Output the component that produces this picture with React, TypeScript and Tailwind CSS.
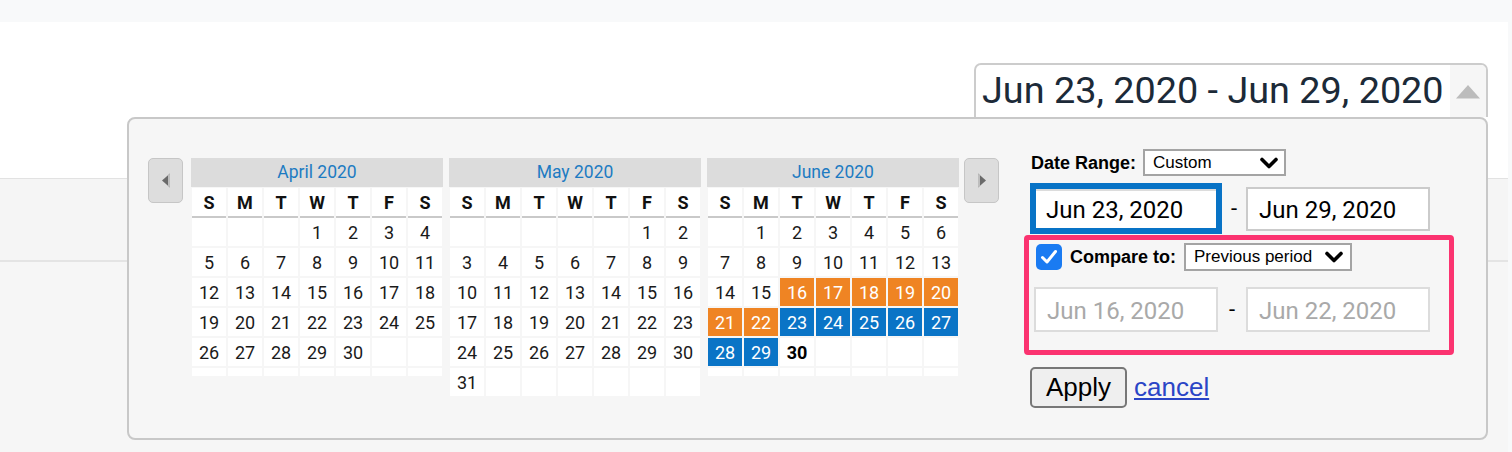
import React from "react";

type MonthProps = { title: string; start: number; days: number };

const ORANGE = [16, 17, 18, 19, 20, 21, 22];
const BLUE = [23, 24, 25, 26, 27, 28, 29];

function Month({ title, start, days, june }: MonthProps & { june?: boolean }) {
  const cells: (number | null)[] = [];
  for (let i = 0; i < start; i++) cells.push(null);
  for (let d = 1; d <= days; d++) cells.push(d);
  while (cells.length % 7 !== 0) cells.push(null);
  const weeks = cells.length / 7;
  const names = ["S", "M", "T", "W", "T", "F", "S"];
  return (
    <div className="w-[252px] flex flex-col">
      <div className="h-[29px] bg-[#dcdcdc] flex items-center justify-center text-[17.5px] text-[#1d7bc2]">
        {title}
      </div>
      <div className="grid grid-cols-7 gap-x-[2px] px-[1px] mt-[1px]">
        {names.map((n, i) => (
          <div
            key={i}
            className="h-[30px] bg-white border-b-2 border-[#c9c9c9] flex items-center justify-center font-bold text-[18px] text-[#111]"
          >
            {n}
          </div>
        ))}
      </div>
      <div className="grid grid-cols-7 gap-x-[2px] gap-y-[2px] px-[1px]">
        {cells.map((d, i) => {
          const orange = june && d !== null && ORANGE.includes(d);
          const blue = june && d !== null && BLUE.includes(d);
          const bold = june && d === 30;
          return (
            <div
              key={i}
              className={
                orange
                  ? "h-[28px] bg-[#ef8423] text-white flex items-center justify-center text-[18px]"
                  : blue
                  ? "h-[28px] bg-[#0a74c6] text-white flex items-center justify-center text-[18px]"
                  : bold
                  ? "h-[28px] bg-white text-black font-bold flex items-center justify-center text-[18px]"
                  : "h-[28px] bg-white text-[#1a1a1a] flex items-center justify-center text-[18px]"
              }
            >
              {d ?? ""}
            </div>
          );
        })}
        {weeks < 6 &&
          names.map((_, i) => <div key={"e" + i} className="h-[8px] bg-white" />)}
      </div>
    </div>
  );
}

function NavButton({ dir }: { dir: "left" | "right" }) {
  return (
    <div className="w-[35px] h-[45px] bg-[#dddddd] border border-[#c6c6c6] rounded-[5px] flex items-center justify-center shrink-0">
      <svg width="10" height="15" viewBox="0 0 10 15">
        {dir === "left" ? (
          <>
            <polygon points="9,0.5 9,14.5 1,7.5" fill="#6a6a6a" />
            <polygon points="9,0.5 9,14.5 7,12.7 7,2.3" fill="#bdbdbd" />
          </>
        ) : (
          <>
            <polygon points="1,0.5 1,14.5 9,7.5" fill="#6a6a6a" />
            <polygon points="1,0.5 1,14.5 3,12.7 3,2.3" fill="#bdbdbd" />
          </>
        )}
      </svg>
    </div>
  );
}

function Chevron() {
  return (
    <svg width="18" height="12" viewBox="0 0 18 12">
      <polyline
        points="2,2.5 9,9.5 16,2.5"
        fill="none"
        stroke="#000"
        strokeWidth="3.6"
        strokeLinecap="round"
        strokeLinejoin="round"
      />
    </svg>
  );
}

export default function App() {
  return (
    <div className="w-[1512px] h-[452px] bg-[#f8f9fa] overflow-hidden font-[Roboto,sans-serif]">
      <div className="h-[22px]" />
      <div className="w-[1508px]">
        <div className="h-[156px] bg-white flex justify-end pr-[20px] pt-[41px]">
          <div className="relative w-[514px] h-[54px] border-2 border-b-0 border-[#cccccc] rounded-t-[7px] bg-white flex items-center z-20">
            <span className="pl-[6px] text-[37.8px] leading-none text-[#1c2a38] whitespace-nowrap">
              Jun 23, 2020 - Jun 29, 2020
            </span>
            <div className="ml-auto w-[36px] h-full bg-[#f6f6f6] rounded-tr-[5px] flex items-center justify-center">
              <svg width="26" height="15" viewBox="0 0 26 15">
                <polygon points="1,14.5 25,14.5 13,1" fill="#bcbcbc" />
              </svg>
            </div>

            <div className="absolute right-[-2px] top-full w-[1361px] bg-[#f6f6f6] border-2 border-[#c8c8c8] rounded-[8px] pt-[30px] pb-[30px] pl-[19px] flex items-start">
              <div className="mt-[9px] flex items-start">
                <NavButton dir="left" />
                <div className="ml-[8px] flex gap-[6px]">
                  <Month title="April 2020" start={3} days={30} />
                  <Month title="May 2020" start={5} days={31} />
                  <Month title="June 2020" start={1} days={30} june />
                </div>
                <div className="ml-[5px]">
                  <NavButton dir="right" />
                </div>
              </div>

              <div className="ml-[25px] w-[430px] flex flex-col text-black">
                <div className="h-[27px] flex items-center pl-[7px]">
                  <span className="font-['Liberation_Sans',Arial,sans-serif] font-bold text-[18px] leading-none">
                    Date Range:
                  </span>
                  <div className="ml-[7px] w-[143px] h-[27px] border-2 border-[#a4a4a4] bg-white flex items-center justify-between pl-[8px] pr-[6px] text-[17px] font-['Liberation_Sans',Arial,sans-serif]">
                    <span>Custom</span>
                    <Chevron />
                  </div>
                </div>

                <div className="mt-[7px] flex items-center pl-[6px]">
                  <div className="w-[192px] h-[51px] border-[6px] border-[#0873c6] bg-white shadow-[inset_0_2px_0_#dcdcdc] flex items-center pl-[10px] pt-[2px] text-[24px]">
                    Jun 23, 2020
                  </div>
                  <div className="w-[24px] text-center text-[22px] leading-none">-</div>
                  <div className="w-[184px] h-[44px] border-2 border-[#cbcbcb] bg-white flex items-center pl-[11px] pt-[2px] text-[24px]">
                    Jun 29, 2020
                  </div>
                </div>

                <div className="mt-[1px] w-[430px] h-[120px] border-[5px] border-[#fb3370] rounded-[4px] pt-[3px] pl-[5px]">
                  <div className="h-[28px] flex items-center">
                    <div className="ml-[2px] w-[26px] h-[26px] rounded-[5px] bg-[#1a7bf2] flex items-center justify-center">
                      <svg width="18" height="16" viewBox="0 0 18 16">
                        <polyline
                          points="2.5,8.5 7,13 15.5,2.5"
                          fill="none"
                          stroke="#fff"
                          strokeWidth="3"
                          strokeLinecap="round"
                          strokeLinejoin="round"
                        />
                      </svg>
                    </div>
                    <span className="ml-[8px] font-['Liberation_Sans',Arial,sans-serif] font-bold text-[18px] leading-none">
                      Compare to:
                    </span>
                    <div className="ml-[8px] w-[168px] h-[28px] border-2 border-[#a4a4a4] bg-white flex items-center justify-between pl-[8px] pr-[7px] text-[17px] font-['Liberation_Sans',Arial,sans-serif]">
                      <span>Previous period</span>
                      <Chevron />
                    </div>
                  </div>
                  <div className="mt-[16px] flex items-center">
                    <div className="w-[184px] h-[45px] border-2 border-[#dcdcdc] bg-white flex items-center pl-[11px] pt-[2px] text-[24px] text-[#a9a9a9]">
                      Jun 16, 2020
                    </div>
                    <div className="w-[28px] text-center text-[22px] leading-none">-</div>
                    <div className="w-[184px] h-[45px] border-2 border-[#dcdcdc] bg-white flex items-center pl-[11px] pt-[2px] text-[24px] text-[#a9a9a9]">
                      Jun 22, 2020
                    </div>
                  </div>
                </div>

                <div className="mt-[12px] flex items-center pl-[6px] font-['Liberation_Sans',Arial,sans-serif]">
                  <div className="w-[97px] h-[41px] border-2 border-[#777777] rounded-[5px] bg-[#efefef] flex items-center justify-center text-[26px] text-black">
                    Apply
                  </div>
                  <a href="#" className="ml-[7px] text-[26px] underline text-[#2a45c6]">
                    cancel
                  </a>
                </div>
              </div>
            </div>
          </div>
        </div>
        <div className="h-[82px] bg-[#f5f5f5] border-t border-[#e2e2e2]" />
        <div className="h-[192px] bg-[#f6f6f6] border-t-2 border-[#e4e4e4]" />
      </div>
    </div>
  );
}
